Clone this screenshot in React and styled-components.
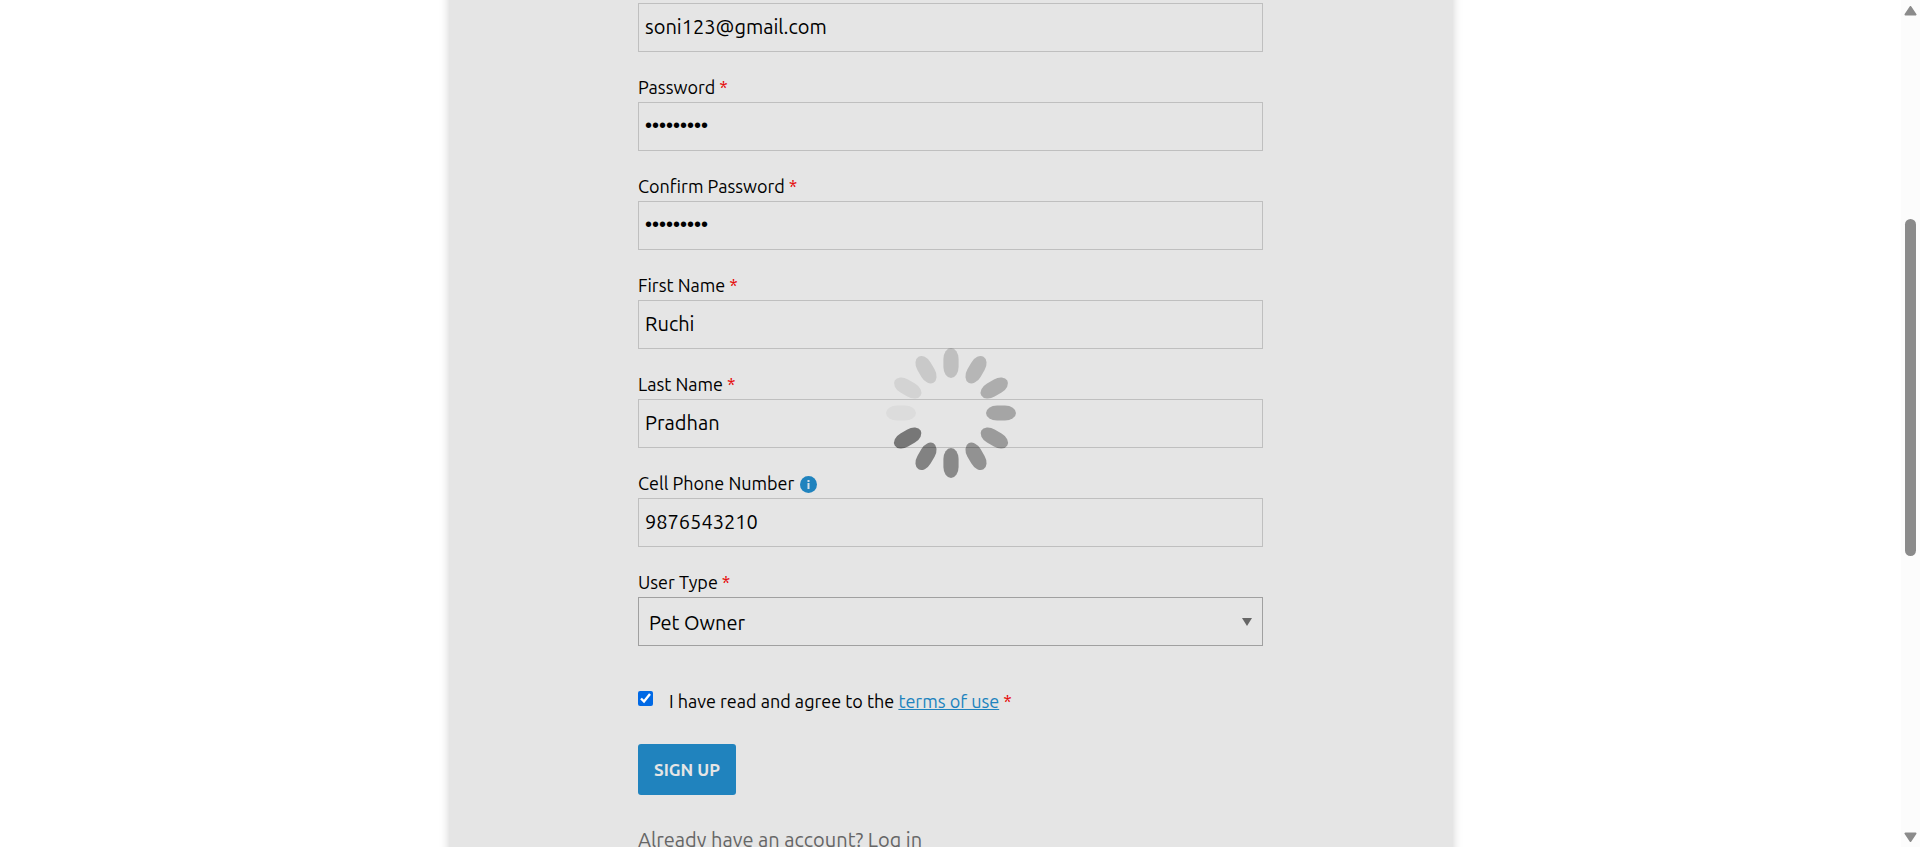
import React from "react";
import styled, { createGlobalStyle } from "styled-components";

const textFont = `Ubuntu, "Noto Sans", sans-serif`;
const blue = "#2083be";

const GlobalStyle = createGlobalStyle`
  *, *::before, *::after { box-sizing: border-box; }
  body { margin: 0; background: #fff; color: #000; font-family: ${textFont}; }
`;

const Viewport = styled.div`
  position: relative;
  display: flex;
  height: 100vh;
  overflow: hidden;
`;

const Page = styled.main`
  flex: 1;
  display: flex;
  justify-content: center;
  overflow: hidden;
`;

const Panel = styled.section`
  width: 100%;
  max-width: 1002px;
  display: flex;
  justify-content: center;
  align-items: flex-start;
  margin: -20px 0;
  padding: 23px 24px 0;
  background: #e5e5e5;
  box-shadow: 0 0 10px rgba(0, 0, 0, 0.22);
`;

const Form = styled.form`
  width: 100%;
  max-width: 625px;
  display: flex;
  flex-direction: column;
`;

const Field = styled.div`
  display: flex;
  flex-direction: column;
  margin-bottom: 22px;
`;

const Label = styled.label`
  display: flex;
  align-items: center;
  gap: 4px;
  height: 28px;
  font-size: 18px;
  line-height: 24px;
  padding-bottom: 2px;
`;

const Star = styled.span`
  color: #e50000;
`;

const Input = styled.input`
  width: 100%;
  height: 49px;
  padding: 0 6px 2px;
  border: 1px solid #bfbfbf;
  border-radius: 0;
  background: transparent;
  color: #000;
  font-family: ${(p) => (p.type === "password" ? `"Liberation Sans", sans-serif` : textFont)};
  font-size: 20px;
  outline: none;
`;

const SelectWrap = styled.div`
  display: grid;
  align-items: center;

  > * { grid-area: 1 / 1; }
`;

const Select = styled.select`
  appearance: none;
  width: 100%;
  height: 49px;
  padding: 1px 32px 0 10px;
  border: 1px solid #a0a0a0;
  border-radius: 0;
  background: transparent;
  color: #000;
  font-family: ${textFont};
  font-size: 20px;
  outline: none;
`;

const Caret = styled.svg`
  justify-self: end;
  margin-right: 11px;
  pointer-events: none;
`;

const InfoIcon = styled.svg`
  margin: 3px 0 0 2px;
`;

const Terms = styled.div`
  display: flex;
  align-items: center;
  gap: 16px;
  margin: 19px 0 29px;
  height: 28px;
  font-size: 18px;
  line-height: 24px;
`;

const Checkbox = styled.input`
  width: 15px;
  height: 15px;
  margin: 0 0 5px;
  accent-color: #0069e5;
`;

const TermsLink = styled.a`
  color: ${blue};
  text-decoration: underline;
`;

const SubmitButton = styled.button`
  align-self: flex-start;
  height: 51px;
  padding: 0 16px;
  border: 0;
  border-radius: 3px;
  background: ${blue};
  color: #e5e5e5;
  font-family: ${textFont};
  font-size: 17px;
  font-weight: 700;
`;

const LoginLink = styled.a`
  align-self: flex-start;
  margin-top: 31px;
  color: #666;
  font-size: 20px;
  line-height: 28px;
  text-decoration: none;
  white-space: nowrap;
`;

const Overlay = styled.div`
  position: absolute;
  inset: 0 19px 22px 0;
  display: grid;
  place-items: center;
  pointer-events: none;
`;

const Scrollbar = styled.div`
  flex: 0 0 19px;
  display: flex;
  flex-direction: column;
  align-items: center;
  padding: 6px 0 5px;
  background: #fcfcfc;
`;

const Track = styled.div`
  flex: 1;
  display: grid;
  grid-template-rows: 203fr 337fr 276fr;
`;

const Thumb = styled.div`
  grid-row: 2;
  width: 11px;
  border-radius: 6px;
  background: #8b8b8b;
`;

const petals = [0.165, 0.205, 0.245, 0.28, 0.32, 0.36, 0.4, 0.43, 0.48, 0.04, 0.08, 0.12];

function Spinner() {
  return (
    <svg width="132" height="132" viewBox="-66 -66 132 132" role="img" aria-label="Loading">
      {petals.map((opacity, i) => (
        <rect
          key={i}
          x="-7.6"
          y="-65"
          width="15.2"
          height="30"
          rx="7.6"
          ry="11"
          fillOpacity={opacity}
          transform={`rotate(${i * 30})`}
        />
      ))}
    </svg>
  );
}

function Info() {
  return (
    <InfoIcon width="17" height="17" viewBox="0 0 17 17" role="img" aria-label="Information">
      <circle cx="8.5" cy="8.5" r="8.5" fill={blue} />
      <path d="M7.5 4h2v2h-2zM7.5 7h2v6h-2z" fill="#d6e0e7" />
    </InfoIcon>
  );
}

function Arrow({ down }) {
  return (
    <svg width="13" height="10" viewBox="0 0 13 10" aria-hidden="true">
      <path
        d="M6.5 1 L11.5 8.5 H1.5 Z"
        fill="#8b8b8b"
        stroke="#8b8b8b"
        strokeWidth="2"
        strokeLinejoin="round"
        transform={down ? "rotate(180 6.5 5)" : undefined}
      />
    </svg>
  );
}

const fields = [
  { id: "email", type: "email", value: "soni123@gmail.com" },
  { id: "password", label: "Password", type: "password", value: "ruchi1234", required: true },
  { id: "confirm", label: "Confirm Password", type: "password", value: "ruchi1234", required: true },
  { id: "first", label: "First Name", type: "text", value: "Ruchi", required: true },
  { id: "last", label: "Last Name", type: "text", value: "Pradhan", required: true },
  { id: "phone", label: "Cell Phone Number", type: "tel", value: "9876543210", info: true },
];

export default function App() {
  return (
    <>
      <GlobalStyle />
      <Viewport>
        <Page>
          <Panel>
            <Form onSubmit={(e) => e.preventDefault()}>
              {fields.map((f) => (
                <Field key={f.id}>
                  {f.label && (
                    <Label htmlFor={f.id}>
                      {f.label}
                      {f.required && <Star>*</Star>}
                      {f.info && <Info />}
                    </Label>
                  )}
                  <Input
                    id={f.id}
                    type={f.type}
                    defaultValue={f.value}
                    aria-label={f.label ? undefined : "Email"}
                  />
                </Field>
              ))}
              <Field>
                <Label htmlFor="userType">
                  User Type<Star>*</Star>
                </Label>
                <SelectWrap>
                  <Select id="userType" defaultValue="owner">
                    <option value="owner">Pet Owner</option>
                  </Select>
                  <Caret width="10" height="8" viewBox="0 0 10 8" aria-hidden="true">
                    <path d="M0 0H10L5 8Z" fill="#666" />
                  </Caret>
                </SelectWrap>
              </Field>
              <Terms>
                <Checkbox id="agree" type="checkbox" defaultChecked />
                <label htmlFor="agree">
                  I have read and agree to the <TermsLink href="#terms">terms of use</TermsLink>{" "}
                  <Star>*</Star>
                </label>
              </Terms>
              <SubmitButton type="submit">SIGN UP</SubmitButton>
              <LoginLink href="#login">Already have an account? Log in</LoginLink>
            </Form>
          </Panel>
        </Page>
        <Scrollbar>
          <Arrow />
          <Track>
            <Thumb />
          </Track>
          <Arrow down />
        </Scrollbar>
        <Overlay>
          <Spinner />
        </Overlay>
      </Viewport>
    </>
  );
}
